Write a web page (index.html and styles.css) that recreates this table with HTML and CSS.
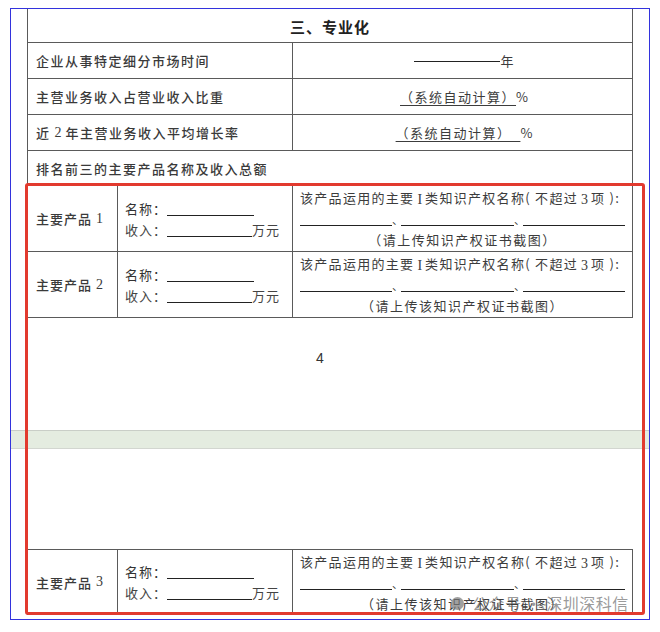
FILE: index.html
```html
<!DOCTYPE html>
<html lang="zh">
<head>
<meta charset="utf-8">
<link rel="stylesheet" href="styles.css">
</head>
<body>
<div class="frame">
  <div class="sheet top">
    <div class="cell title span3">三、专业化</div>
    <div class="cell label span2">企业从事特定细分市场时间</div>
    <div class="cell value"><span class="blank b86"></span>年</div>
    <div class="cell label span2">主营业务收入占营业收入比重</div>
    <div class="cell value"><span class="ul">（系统自动计算）</span>%</div>
    <div class="cell label span2">近<span class="num">2</span>年主营业务收入平均增长率</div>
    <div class="cell value"><span class="ul">（系统自动计算）&nbsp;&nbsp;</span>%</div>
    <div class="cell label span3">排名前三的主要产品名称及收入总额</div>

    <div class="cell prod">主要产品<span class="num">1</span></div>
    <div class="cell info">
      <div class="line">名称：<span class="blank b87"></span></div>
      <div class="line">收入：<span class="blank b85"></span>万元</div>
    </div>
    <div class="cell ip">
      <div class="line head">该产品运用的主要<span class="num">I</span>类知识产权名称( 不超过<span class="num">3</span>项 ):</div>
      <div class="line blanks"><span class="blank b92"></span><span class="sep">、</span><span class="blank b113"></span><span class="sep">、</span><span class="blank b102"></span></div>
      <div class="line center">（请上传知识产权证书截图）</div>
    </div>

    <div class="cell prod">主要产品<span class="num">2</span></div>
    <div class="cell info">
      <div class="line">名称：<span class="blank b87"></span></div>
      <div class="line">收入：<span class="blank b85"></span>万元</div>
    </div>
    <div class="cell ip">
      <div class="line head">该产品运用的主要<span class="num">I</span>类知识产权名称( 不超过<span class="num">3</span>项 ):</div>
      <div class="line blanks"><span class="blank b92"></span><span class="sep">、</span><span class="blank b113"></span><span class="sep">、</span><span class="blank b102"></span></div>
      <div class="line center">（请上传该知识产权证书截图）</div>
    </div>
  </div>

  <div class="page-foot"><span class="page-no">4</span></div>
  <div class="page-gap"></div>
  <div class="page-head"></div>

  <div class="sheet bottom">
    <div class="cell prod">主要产品<span class="num">3</span></div>
    <div class="cell info">
      <div class="line">名称：<span class="blank b87"></span></div>
      <div class="line">收入：<span class="blank b85"></span>万元</div>
    </div>
    <div class="cell ip">
      <div class="line head">该产品运用的主要<span class="num">I</span>类知识产权名称( 不超过<span class="num">3</span>项 ):</div>
      <div class="line blanks"><span class="blank b92"></span><span class="sep">、</span><span class="blank b113"></span><span class="sep">、</span><span class="blank b102"></span></div>
      <div class="line center">（请上传该知识产权证书截图）</div>
    </div>
  </div>

  <div class="highlight"></div>
  <div class="watermark"><span class="wm-icon"></span>公众号 · 深圳深科信</div>
</div>
</body>
</html>
```
FILE: styles.css
```css
html, body {
  margin: 0;
  padding: 0;
  background: #ffffff;
}

body {
  width: 660px;
  height: 632px;
  overflow: hidden;
  font-family: "Noto Sans CJK SC", "Noto Sans", sans-serif;
  color: #333;
}

.frame {
  position: relative;
  margin: 8px 0 0 10px;
  width: 638px;
  height: 610px;
  border: 1px solid #3333dd;
}

.sheet {
  display: grid;
  grid-template-columns: 89px 174px 339px;
  column-gap: 1px;
  row-gap: 1px;
  background: #5a5a5a;
  margin-left: 16px;
  width: 604px;
  padding: 0 1px 1px 1px;
}

.sheet.top {
  grid-template-rows: 33px 35px 35px 35px 34px 65px 65px;
}

.sheet.bottom {
  padding-top: 1px;
  grid-template-rows: 64px;
}

.cell {
  background: #ffffff;
  display: flex;
  align-items: center;
  font-size: 13px;
  min-width: 0;
}

.span2 { grid-column: span 2; }
.span3 { grid-column: span 3; }

.title {
  justify-content: center;
  font-size: 15px;
  font-weight: 700;
  letter-spacing: 1px;
  color: #222;
  padding-top: 1px;
}

.label {
  padding-left: 8px;
  letter-spacing: 1.5px;
  font-weight: 500;
  color: #3a3a3a;
}

.num {
  font-family: "Liberation Serif", serif;
  font-size: 14px;
  letter-spacing: 0;
  margin: 0 4px;
  vertical-align: -1px;
}

.value {
  justify-content: center;
  font-weight: 400;
  font-size: 13px;
  letter-spacing: 1px;
  color: #3c3c3c;
  padding-left: 4px;
}

.ul {
  text-decoration: underline;
  text-decoration-thickness: 1px;
  text-underline-offset: 3px;
  letter-spacing: 1.5px;
}

.blank {
  display: inline-block;
  height: 1px;
  border-bottom: 1px solid #222;
  vertical-align: -2px;
}

.b86 { width: 86px; }
.b87 { width: 87px; }
.b85 { width: 85px; }
.b92 { width: 92px; }
.b113 { width: 113px; }
.b102 { width: 102px; }

.prod {
  padding-left: 8px;
  font-weight: 500;
  letter-spacing: 1px;
  color: #3a3a3a;
}

.info {
  flex-direction: column;
  align-items: flex-start;
  justify-content: center;
  padding-left: 7px;
  font-weight: 400;
  color: #444;
}

.info .line {
  height: 21px;
  line-height: 21px;
  letter-spacing: 1px;
}

.info .line:first-child {
  color: #333;
}

.ip {
  flex-direction: column;
  align-items: stretch;
  justify-content: flex-start;
  padding: 2px 7px 0 7px;
  font-weight: 400;
  color: #3c3c3c;
}

.ip .line {
  height: 20px;
  line-height: 20px;
  white-space: nowrap;
}

.ip .head {
  letter-spacing: 1.3px;
}

.ip .head .num {
  margin: 0 3px;
}

.ip .blanks {
  display: flex;
  align-items: flex-end;
  height: 22px;
  padding-bottom: 4px;
  box-sizing: border-box;
}

.sep {
  display: inline-block;
  width: 9px;
  font-size: 11px;
  line-height: 10px;
  margin-bottom: 2px;
  overflow: visible;
}

.center {
  text-align: center;
  letter-spacing: 1.5px;
}

.page-foot {
  height: 112px;
  display: flex;
  justify-content: center;
}

.page-no {
  margin-top: 32px;
  font-family: "Liberation Sans", sans-serif;
  font-size: 14px;
  color: #333;
  margin-right: 20px;
}

.page-gap {
  height: 17px;
  background: #e4ece0;
  border-top: 1px solid #c9cec7;
  border-bottom: 1px solid #d2d6d0;
}

.page-head {
  height: 100px;
}

.highlight {
  position: absolute;
  left: 14px;
  top: 174px;
  width: 614px;
  height: 426px;
  border: 3px solid #e23a2e;
  border-radius: 3px;
}

.watermark {
  position: absolute;
  left: 440px;
  top: 582px;
  display: flex;
  align-items: center;
  font-size: 16px;
  color: rgba(110, 110, 110, 0.7);
  letter-spacing: 0.5px;
  white-space: nowrap;
}

.wm-icon {
  display: inline-block;
  width: 13px;
  height: 13px;
  border-radius: 50%;
  background: rgba(120, 120, 120, 0.7);
  margin-right: 8px;
}
```
